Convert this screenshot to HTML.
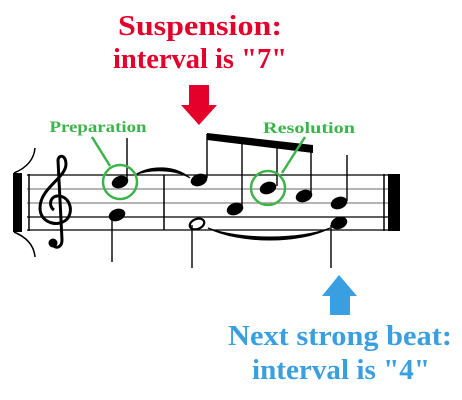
<!DOCTYPE html>
<html><head><style>html,body{margin:0;padding:0;background:#fff}svg{display:block}</style></head>
<body>
<svg width="462" height="400" viewBox="0 0 462 400" xmlns="http://www.w3.org/2000/svg">
<g font-family="'Liberation Serif',serif" font-weight="bold" text-anchor="middle">
<text x="200" y="35" font-size="28" fill="#e4002b" textLength="164" lengthAdjust="spacingAndGlyphs">Suspension:</text>
<text x="200" y="68" font-size="28" fill="#e4002b" textLength="174" lengthAdjust="spacingAndGlyphs">interval is "7"</text>
<text x="340" y="345" font-size="28" fill="#3a9fe0" textLength="224" lengthAdjust="spacingAndGlyphs">Next strong beat:</text>
<text x="341" y="379" font-size="28" fill="#3a9fe0" textLength="178" lengthAdjust="spacingAndGlyphs">interval is "4"</text>
<text x="98" y="132" font-size="16" fill="#3cb44b" textLength="97" lengthAdjust="spacingAndGlyphs">Preparation</text>
<text x="309" y="133" font-size="16" fill="#3cb44b" textLength="92" lengthAdjust="spacingAndGlyphs">Resolution</text>
</g>
<polygon points="189,85 209,85 209,105 217,105 199,125 181,105 189,105" fill="#e4002b"/>
<polygon points="339,275 357,296 350,296 350,315 330,315 330,296 322,296" fill="#3a9fe0"/>
<g stroke-width="1.2">
<line x1="27" y1="175" x2="390" y2="175" stroke="#000"/>
<line x1="27" y1="189" x2="390" y2="189" stroke="#888"/>
<line x1="27" y1="203" x2="390" y2="203" stroke="#888"/>
<line x1="27" y1="217" x2="390" y2="217" stroke="#000"/>
<line x1="27" y1="230" x2="390" y2="230" stroke="#000"/>
</g>
<rect x="13" y="173" width="9" height="59" fill="#000"/>
<line x1="29" y1="174" x2="29" y2="231" stroke="#000" stroke-width="1.5"/>
<path d="M14,173 C26,168 34,160 35,148" fill="none" stroke="#000" stroke-width="1.5"/>
<path d="M14,232 C26,237 34,245 35,257" fill="none" stroke="#000" stroke-width="1.5"/>
<rect x="388" y="174" width="12" height="57" fill="#000"/>
<line x1="384" y1="174" x2="384" y2="231" stroke="#000" stroke-width="1.5"/>
<path d="M52,244 C56,250 62,247 62,240 L58,160 C59,154 66,155 66,164 C66,178 40,188 40,208 C40,224 60,228 68,218 C74,208 68,196 58,196 C50,196 48,206 54,210" fill="none" stroke="#000" stroke-width="3"/>
<circle cx="53" cy="243" r="4.5" fill="#000"/>
<line x1="164" y1="175" x2="164" y2="230" stroke="#000" stroke-width="1.5"/>
<g fill="#000">
<ellipse cx="120" cy="182" rx="8.5" ry="6" transform="rotate(-20 120 182)"/>
<ellipse cx="117" cy="215" rx="8.5" ry="6" transform="rotate(-20 117 215)"/>
<ellipse cx="199" cy="180" rx="8.5" ry="6" transform="rotate(-20 199 180)"/>
<ellipse cx="235" cy="209" rx="8.5" ry="6" transform="rotate(-20 235 209)"/>
<ellipse cx="268" cy="188" rx="8.5" ry="6" transform="rotate(-20 268 188)"/>
<ellipse cx="304" cy="196" rx="8.5" ry="6" transform="rotate(-20 304 196)"/>
<ellipse cx="339" cy="203" rx="8.5" ry="6" transform="rotate(-20 339 203)"/>
<ellipse cx="339" cy="223" rx="8.5" ry="6" transform="rotate(-20 339 223)"/>
</g>
<ellipse cx="197" cy="224" rx="7.5" ry="5" transform="rotate(-20 197 224)" fill="none" stroke="#000" stroke-width="2.2"/>
<g stroke="#000" stroke-width="1.4">
<line x1="127" y1="138" x2="127" y2="180"/>
<line x1="112" y1="216" x2="112" y2="262"/>
<line x1="207" y1="134" x2="207" y2="178"/>
<line x1="242" y1="138" x2="242" y2="207"/>
<line x1="277" y1="143" x2="277" y2="186"/>
<line x1="311" y1="147" x2="311" y2="194"/>
<line x1="347" y1="155" x2="347" y2="201"/>
<line x1="192" y1="225" x2="192" y2="268"/>
<line x1="331" y1="225" x2="331" y2="268"/>
</g>
<polygon points="207,133 313,145 313,153 207,140" fill="#000"/>
<path d="M135,175 C150,165 175,165 190,178 C175,169 150,169 135,175Z" fill="#000" stroke="#000" stroke-width="1"/>
<path d="M208,228 C240,244 300,244 330,228 C300,240 240,240 208,228Z" fill="#000" stroke="#000" stroke-width="1"/>
<g stroke="#3cb44b" stroke-width="2.5" fill="none">
<circle cx="120" cy="182" r="17"/>
<circle cx="268" cy="188" r="17"/>
<line x1="92" y1="137" x2="110" y2="166"/>
<line x1="305" y1="137" x2="282" y2="173"/>
</g>
</svg>
</body></html>
